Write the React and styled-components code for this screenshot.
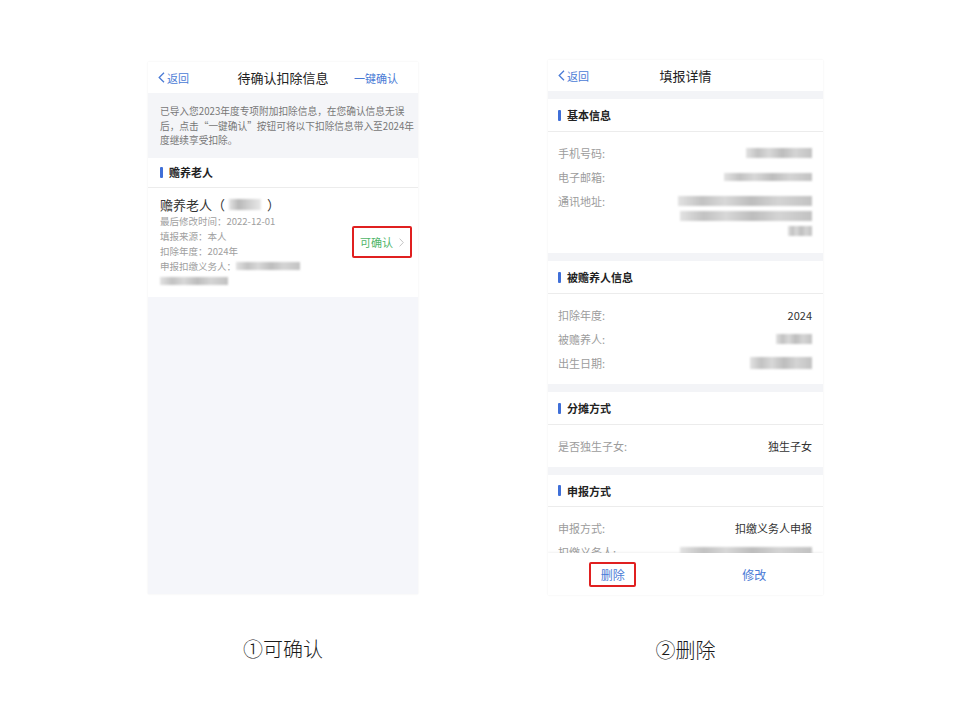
import React from 'react';
import styled, { createGlobalStyle } from 'styled-components';

const Colors = {
  blue: '#4a7bd6',
  bar: '#3f6fd8',
  title: '#222',
  text: '#333',
  label: '#9c9c9c',
  muted: '#a0a0a0',
  gray: '#f5f6fa',
  line: '#ececec',
  green: '#4fb56a',
  red: '#e02020',
};

const GlobalStyle = createGlobalStyle`
  * { box-sizing: border-box; }
  html, body { margin: 0; padding: 0; background: #fff; }
  body {
    width: 960px;
    height: 720px;
    overflow: hidden;
    font-family: "Noto Sans CJK SC", "Noto Sans", sans-serif;
  }
`;

const BackArrow = () => (
  <svg width="7" height="11" viewBox="0 0 7 11">
    <polyline points="6,0.8 1.2,5.5 6,10.2" fill="none" stroke={Colors.blue} strokeWidth="1.3" />
  </svg>
);

const Chevron = () => (
  <svg width="5" height="9" viewBox="0 0 5 9">
    <polyline points="0.6,0.6 4.3,4.5 0.6,8.4" fill="none" stroke="#c4c4c4" strokeWidth="1" />
  </svg>
);

const App = () => (
  <Page>
    <GlobalStyle />
    <Column>
      <Phone $top={62} $w={270} $h={532}>
        <Nav $h={31}>
          <Back><BackArrow />返回</Back>
          <NavTitle>待确认扣除信息</NavTitle>
          <NavAction>一键确认</NavAction>
        </Nav>
        <Notice>
          已导入您2023年度专项附加扣除信息，在您确认信息无误<br />
          后，点击“一键确认”按钮可将以下扣除信息带入至2024年<br />
          度继续享受扣除。
        </Notice>
        <SectionHead $pad={12} $h={30}>赡养老人</SectionHead>
        <Card>
          <CardInfo>
            <CardName>赡养老人（<NameBlur $w={32} $h={11} $tone="dark" />）</CardName>
            <Detail>最后修改时间：2022-12-01</Detail>
            <Detail>填报来源：本人</Detail>
            <Detail>扣除年度：2024年</Detail>
            <Detail>申报扣缴义务人：<Blur $w={64} $h={8} /></Detail>
            <Detail><Blur $w={68} $h={8} /></Detail>
          </CardInfo>
          <Confirm>可确认<Chevron /></Confirm>
        </Card>
        <Filler />
      </Phone>
      <Caption>①可确认</Caption>
    </Column>

    <Column>
      <Phone $top={60} $w={275} $h={535}>
        <Nav $h={31}>
          <Back><BackArrow />返回</Back>
          <NavTitle>填报详情</NavTitle>
          <span />
        </Nav>
        <Scroll>
          <Spacer />
          <SectionHead $pad={10} $h={33}>基本信息</SectionHead>
          <SectionBody>
            <Row><Label>手机号码:</Label><Blur $w={66} $h={10} /></Row>
            <Row><Label>电子邮箱:</Label><Blur $w={88} $h={8} /></Row>
            <Row $top>
              <Label>通讯地址:</Label>
              <Lines>
                <Blur $w={134} $h={10} />
                <Blur $w={132} $h={10} />
                <Blur $w={24} $h={10} />
              </Lines>
            </Row>
          </SectionBody>
          <Spacer />
          <SectionHead $pad={10} $h={33}>被赡养人信息</SectionHead>
          <SectionBody>
            <Row><Label>扣除年度:</Label><Value>2024</Value></Row>
            <Row><Label>被赡养人:</Label><Blur $w={36} $h={10} /></Row>
            <Row><Label>出生日期:</Label><Blur $w={62} $h={12} /></Row>
          </SectionBody>
          <Spacer />
          <SectionHead $pad={10} $h={33}>分摊方式</SectionHead>
          <SectionBody>
            <Row><Label>是否独生子女:</Label><Value>独生子女</Value></Row>
          </SectionBody>
          <Spacer />
          <SectionHead $pad={10} $h={32}>申报方式</SectionHead>
          <SectionBody>
            <Row><Label>申报方式:</Label><Value>扣缴义务人申报</Value></Row>
            <Row><Label>扣缴义务人:</Label><Blur $w={132} $h={10} /></Row>
          </SectionBody>
        </Scroll>
        <BottomBar>
          <BarButton><Marked>删除</Marked></BarButton>
          <BarButton>修改</BarButton>
        </BottomBar>
      </Phone>
      <Caption>②删除</Caption>
    </Column>
  </Page>
);

export default App;

const Page = styled.div`
  display: flex;
  align-items: flex-start;
  gap: 130px;
  padding-left: 148px;
  width: 960px;
  height: 720px;
`;

const Column = styled.div`
  display: flex;
  flex-direction: column;
  align-items: center;
`;

const Phone = styled.div`
  margin-top: ${(p) => p.$top}px;
  width: ${(p) => p.$w}px;
  height: ${(p) => p.$h}px;
  display: flex;
  flex-direction: column;
  background: #fff;
  box-shadow: 0 0 2px rgba(0, 0, 0, 0.07);
  overflow: hidden;
`;

const Nav = styled.div`
  height: ${(p) => p.$h}px;
  flex-shrink: 0;
  display: grid;
  grid-template-columns: 1fr auto 1fr;
  align-items: center;
  padding: 0 10px;
`;

const Back = styled.span`
  display: flex;
  align-items: center;
  gap: 2px;
  font-size: 11px;
  color: ${Colors.blue};
`;

const NavTitle = styled.span`
  font-size: 13px;
  color: ${Colors.title};
`;

const NavAction = styled.span`
  justify-self: end;
  margin-right: 10px;
  font-size: 11px;
  color: ${Colors.blue};
`;

const Notice = styled.div`
  background: #f4f5f8;
  padding: 11px 0 10px 12px;
  font-size: 9.7px;
  line-height: 14.5px;
  color: #777;
  white-space: nowrap;
`;

const SectionHead = styled.div`
  height: ${(p) => p.$h}px;
  flex-shrink: 0;
  display: flex;
  align-items: center;
  gap: 6px;
  padding-left: ${(p) => p.$pad}px;
  border-bottom: 1px solid ${Colors.line};
  font-size: 11px;
  font-weight: 700;
  color: ${Colors.title};
  background: #fff;
  &::before {
    content: '';
    width: 3px;
    height: 11px;
    border-radius: 1px;
    background: ${Colors.bar};
  }
`;

const Card = styled.div`
  display: flex;
  align-items: center;
  justify-content: space-between;
  padding: 8px 6px 8px 12px;
`;

const CardInfo = styled.div`
  display: flex;
  flex-direction: column;
`;

const CardName = styled.div`
  display: flex;
  align-items: center;
  font-size: 13px;
  line-height: 18px;
  color: ${Colors.text};
`;

const Detail = styled.div`
  display: flex;
  align-items: center;
  font-size: 9.5px;
  line-height: 15px;
  height: 15px;
  color: ${Colors.muted};
`;

const Confirm = styled.div`
  display: flex;
  align-items: center;
  justify-content: center;
  gap: 6px;
  width: 60px;
  height: 32px;
  border: 2px solid ${Colors.red};
  border-radius: 2px;
  font-size: 11px;
  color: ${Colors.green};
`;

const Filler = styled.div`
  flex: 1;
  background: ${Colors.gray};
`;

const Blur = styled.span`
  display: inline-block;
  width: ${(p) => p.$w}px;
  height: ${(p) => p.$h}px;
  background: ${(p) =>
    p.$tone === 'dark'
      ? 'linear-gradient(90deg, #e4e4e4 0%, #b8b8b8 30%, #cfcfcf 60%, #e8e8e8 100%)'
      : 'linear-gradient(90deg, #e2e2e2 0%, #c2c2c2 18%, #d8d8d8 35%, #bdbdbd 55%, #d4d4d4 75%, #c2c2c2 100%)'};
  filter: blur(1.1px);
`;

const NameBlur = styled(Blur)`
  margin: 0 6px 0 4px;
`;

const Scroll = styled.div`
  flex: 1;
  overflow: hidden;
  display: flex;
  flex-direction: column;
`;

const Spacer = styled.div`
  height: 8px;
  flex-shrink: 0;
  background: #f3f4f7;
`;

const SectionBody = styled.div`
  padding: 9px 11px 9px 10px;
  flex-shrink: 0;
`;

const Row = styled.div`
  display: flex;
  justify-content: space-between;
  align-items: ${(p) => (p.$top ? 'flex-start' : 'center')};
  padding: ${(p) => (p.$top ? '5px 0 8px' : '5px 0')};
  min-height: 24px;
`;

const Label = styled.span`
  font-size: 11px;
  line-height: 14px;
  color: ${Colors.label};
`;

const Value = styled.span`
  font-size: 11px;
  line-height: 14px;
  color: ${Colors.text};
`;

const Lines = styled.div`
  display: flex;
  flex-direction: column;
  align-items: flex-end;
  gap: 5px;
  padding-top: 2px;
`;

const BottomBar = styled.div`
  height: 42px;
  flex-shrink: 0;
  display: flex;
  background: #fff;
  box-shadow: 0 -1px 2px rgba(0, 0, 0, 0.06);
`;

const BarButton = styled.div`
  flex: 1;
  display: flex;
  align-items: center;
  justify-content: center;
  font-size: 12px;
  color: ${Colors.blue};
`;

const Marked = styled.span`
  display: flex;
  align-items: center;
  justify-content: center;
  width: 47px;
  height: 25px;
  margin-left: -8px;
  border: 2px solid ${Colors.red};
  border-radius: 2px;
`;

const Caption = styled.div`
  margin-top: 40px;
  font-size: 20px;
  font-weight: 300;
  color: #1a1a1a;
`;
